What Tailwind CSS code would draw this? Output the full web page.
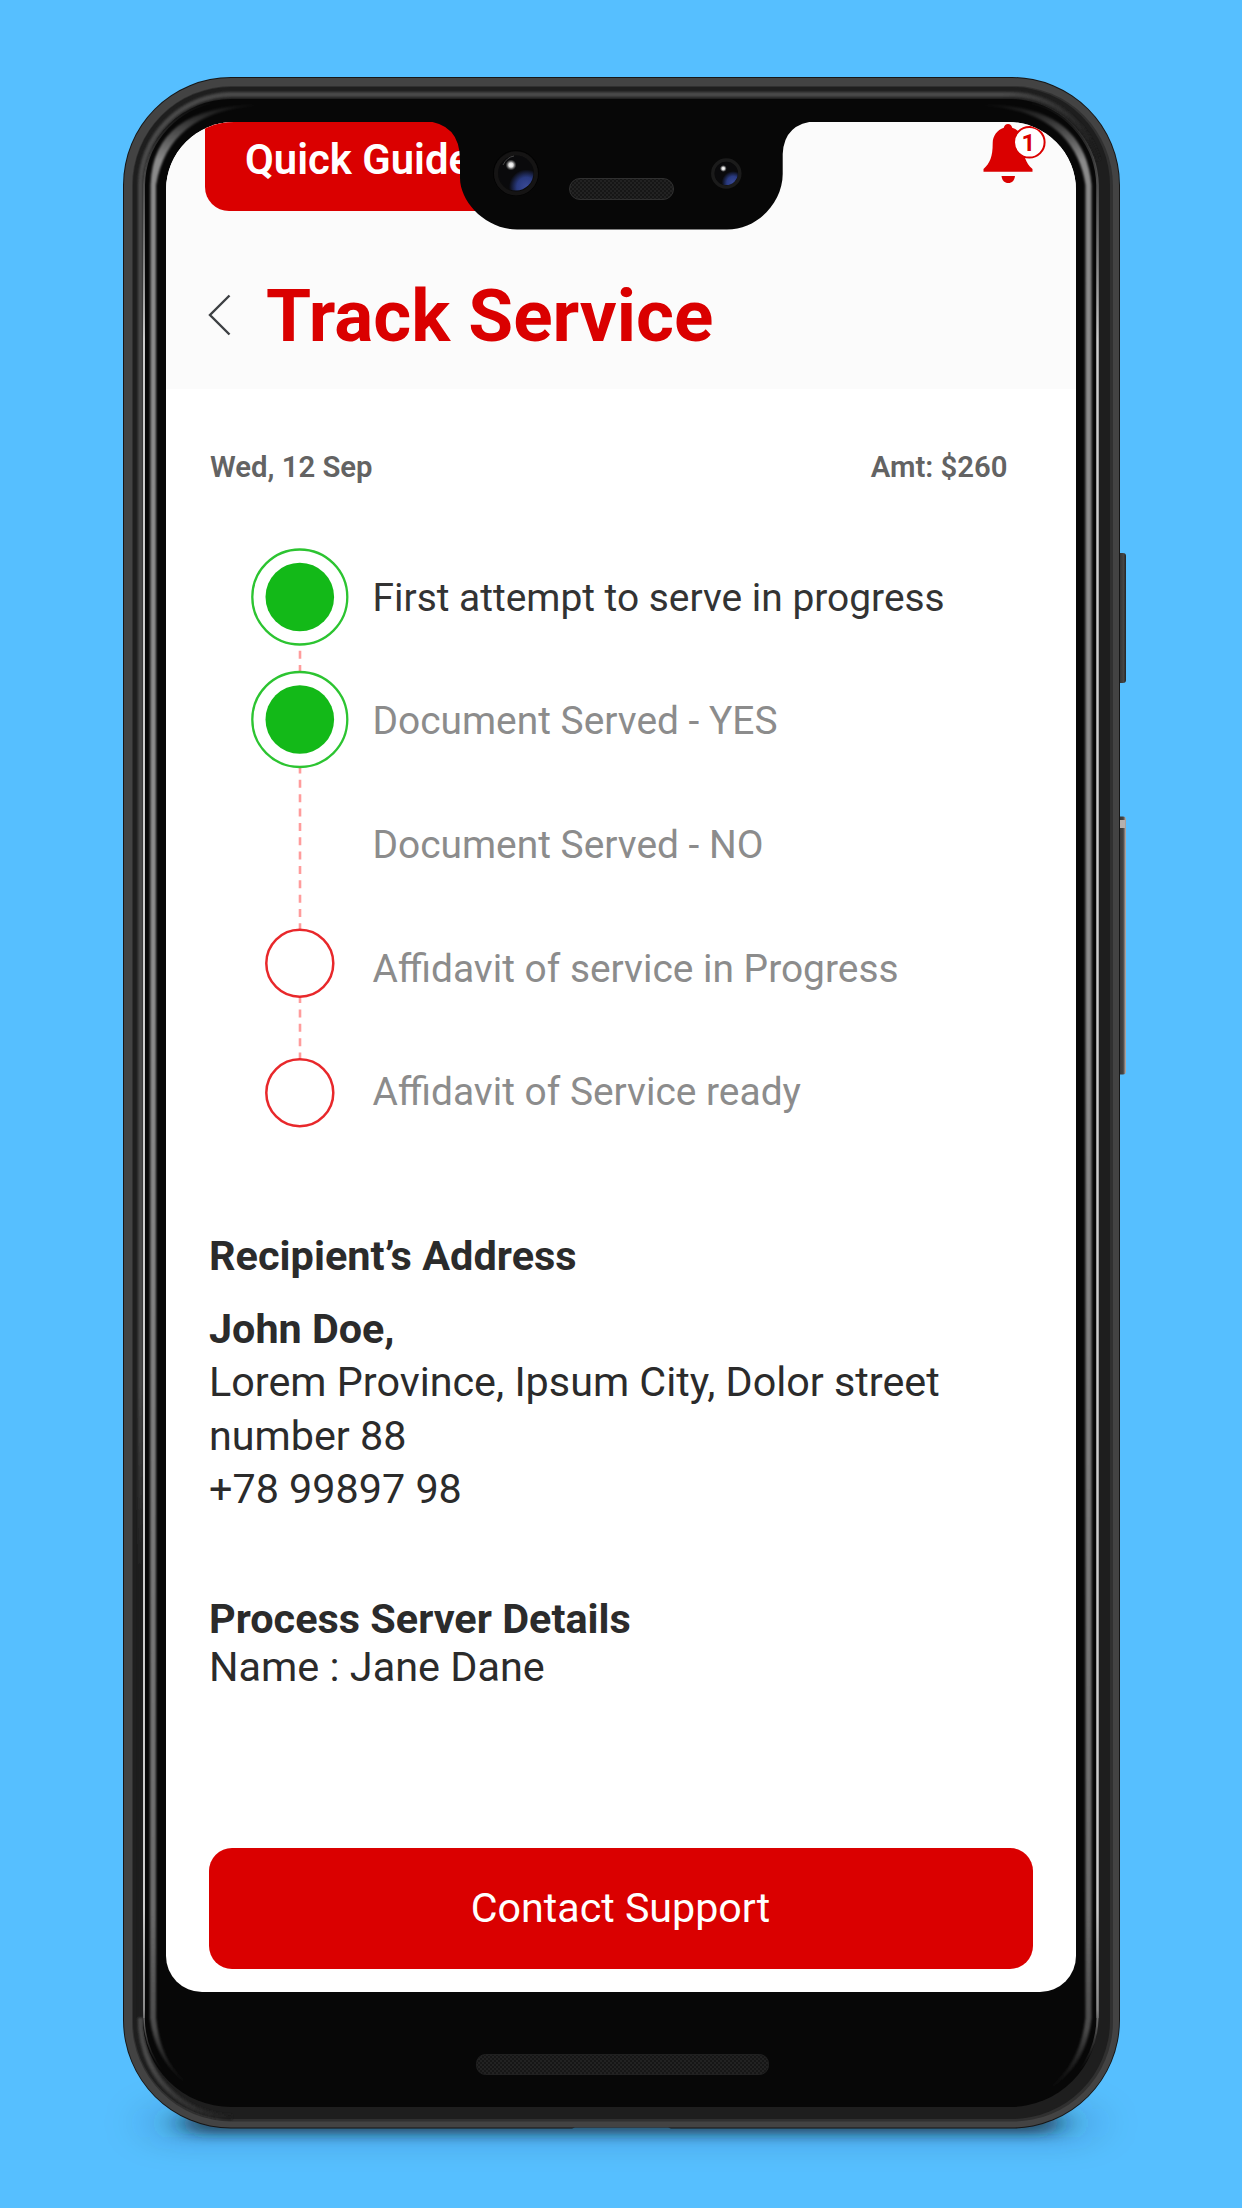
<!DOCTYPE html>
<html lang="en">
<head>
<meta charset="utf-8">
<title>Track Service</title>
<script src="https://cdn.jsdelivr.net/npm/@tailwindcss/browser@4"></script>
</head>
<body class="relative h-[2208px] w-[1242px] overflow-hidden bg-[#56bfff] font-['Roboto',sans-serif] text-[#2b2b2b]">

<!-- Phone body -->
<svg class="absolute inset-0" width="1242" height="2208" viewBox="0 0 1242 2208" fill="none">
  <defs>
    <filter id="soft" x="-10%" y="-200%" width="120%" height="500%"><feGaussianBlur stdDeviation="14 6"/></filter>
    <filter id="wide" x="-10%" y="-200%" width="120%" height="500%"><feGaussianBlur stdDeviation="24 16"/></filter>
    <filter id="edge" x="-5%" y="-5%" width="110%" height="110%"><feGaussianBlur stdDeviation="0.8"/></filter>
    <linearGradient id="fadeL" gradientUnits="userSpaceOnUse" x1="0" y1="100" x2="0" y2="2110">
      <stop offset="0" stop-color="#888" stop-opacity="0"/><stop offset=".03" stop-color="#8a8a8a"/><stop offset=".45" stop-color="#8c8c8c"/><stop offset=".9" stop-color="#6a6a6a"/><stop offset=".96" stop-color="#666" stop-opacity=".7"/><stop offset=".99" stop-color="#444" stop-opacity="0"/>
    </linearGradient>
    <linearGradient id="line" gradientUnits="userSpaceOnUse" x1="0" y1="100" x2="0" y2="2110">
      <stop offset="0" stop-color="#777" stop-opacity="0"/><stop offset=".04" stop-color="#777" stop-opacity=".6"/><stop offset=".12" stop-color="#ccc"/><stop offset=".9" stop-color="#ccc"/><stop offset=".95" stop-color="#aaa" stop-opacity=".8"/><stop offset=".98" stop-color="#444" stop-opacity="0"/>
    </linearGradient>
    <linearGradient id="ring" gradientUnits="userSpaceOnUse" x1="1000" y1="90" x2="1090" y2="150">
      <stop offset="0" stop-color="#4a4a4a"/><stop offset="1" stop-color="#1d1d1d"/>
    </linearGradient>
    <linearGradient id="ringL" gradientUnits="userSpaceOnUse" x1="150" y1="2060" x2="230" y2="2120">
      <stop offset="0" stop-color="#4a4a4a"/><stop offset="1" stop-color="#1d1d1d"/>
    </linearGradient>
    <linearGradient id="key" x1="0" y1="0" x2="1" y2="0"><stop offset="0" stop-color="#2c2c2c"/><stop offset=".7" stop-color="#454545"/><stop offset="1" stop-color="#222"/></linearGradient>
    <linearGradient id="power" x1="0" y1="0" x2="1" y2="0"><stop offset="0" stop-color="#333"/><stop offset=".65" stop-color="#444"/><stop offset="1" stop-color="#c0b2ac"/></linearGradient>
  </defs>
  <rect x="150" y="2108" width="942" height="30" rx="15" fill="#0b2a40" fill-opacity=".22" filter="url(#wide)"/>
  <rect x="184" y="2112" width="874" height="22" rx="11" fill="#0b1a28" fill-opacity=".65" filter="url(#soft)"/>
  <path d="M1118 553h5q3 0 3 3v124q0 3-3 3h-5z" fill="url(#key)"/>
  <path d="M1118 816.500h5q3 0 3 3v252q0 3-3 3h-5z" fill="url(#power)"/>
  <path d="M1120 820h5v8h-5z" fill="#b5b0ad"/>
  <path d="M231 77H1012A108 108 0 0 1 1120 185V2020A108 108.600 0 0 1 1012 2128.600H671l-3-1H575l-3 1H231A108 108.600 0 0 1 123 2020V185A108 108 0 0 1 231 77z" fill="#161616"/>
  <rect x="124" y="78" width="995" height="2049.500" rx="107" fill="#434343"/>
  <rect x="132" y="86" width="981" height="2035.500" rx="100" fill="#303030"/>
  <rect x="133" y="87" width="977" height="2032" rx="98" fill="#1e1e1e"/>
  <g filter="url(#edge)">
    <path d="M140.500 2020V185A92 91 0 0 1 231 94.500H1012A92 91 0 0 1 1098 160" stroke="url(#ring)" stroke-width="5"/>
    <path d="M140.500 2018A92 96 0 0 0 232 2117" stroke="url(#ringL)" stroke-width="5"/>
  </g>
  <rect x="143" y="99" width="955" height="2008" rx="88" fill="#070707"/>
  <path d="M144 2018V185A88 86 0 0 1 210 103" stroke="url(#line)" stroke-width="2"/>
  <path d="M144 2018A88 88 0 0 0 210 2102" stroke="url(#line)" stroke-width="1.500"/>
  <path d="M1097.500 2018V185A86 86 0 0 0 1032 103" stroke="url(#line)" stroke-width="2.500"/>
  <path d="M1097.500 2018A86 88 0 0 1 1032 2102" stroke="url(#line)" stroke-width="2"/>
  <g filter="url(#edge)">
    <path d="M150.500 185Q153 106 258 105Q168 112 156 185V2018Q162 2084 225 2104Q157 2080 150 2018z" fill="url(#fadeL)"/>
    <path d="M1091.500 185Q1084 104 983 105Q1074 112 1085.500 185V2018Q1078 2084 1017 2104Q1084 2084 1091.500 2018z" fill="url(#fadeL)"/>
  </g>
</svg>

<!-- Screen -->
<main class="absolute left-[166px] top-[122px] h-[1869.500px] w-[910px] overflow-hidden rounded-t-[68px] rounded-b-[36px] bg-white">
  <header class="h-[267px] bg-[#fbfbfb]">
    <div class="flex h-[89px] justify-between">
      <div class="ml-[39px] h-[88.500px] w-[320px] rounded-bl-[24px] bg-[#da0000] pl-[40px] text-[41.800px] leading-[75px] font-semibold whitespace-nowrap text-white">Quick Guide</div>
      <svg class="mr-[28px]" width="68" height="66" viewBox="980 122 68 66">
        <path d="M1008 124c2.200 0 3.800 1.400 4.200 3.800C1019 130 1023.500 136 1023.500 143c0 13 2 20 9 26v2.700H983.500V169c6.500-6 9.200-12 9.200-26 0-7 4.500-13 11.100-15.200C1004.200 125.400 1005.800 124 1008 124z" fill="#da0000"/>
        <path d="M1001.500 176h13.500c-.5 4.500-3 7-6.700 7s-6.300-2.500-6.800-7z" fill="#da0000"/>
        <circle cx="1029.300" cy="142.300" r="15.300" fill="#fff" stroke="#da0000" stroke-width="2"/>
        <text x="1028.500" y="151" text-anchor="middle" font-size="24" font-weight="700" fill="#da0000">1</text>
      </svg>
    </div>
    <div class="mt-[54px] flex h-[100px] items-center">
      <svg class="ml-[41px]" width="26" height="44" viewBox="0 0 26 44" fill="none" stroke="#3d4043" stroke-width="2.400"><path d="M22.500 2.500L3 22l19.500 19.500"/></svg>
      <h1 class="ml-[33px] pt-[2px] text-[72.900px] leading-[100px] font-bold text-[#da0000]">Track Service</h1>
    </div>
  </header>

  <div class="mt-[58px] flex h-[40px] justify-between pr-[68.500px] pl-[44px] text-[29.300px] leading-[40px] font-semibold text-[#636363]">
    <span>Wed, 12 Sep</span><span>Amt: $260</span>
  </div>

  <section class="mt-[47.500px] flex">
    <svg class="ml-[80px] shrink-0" width="110" height="618" viewBox="246 535 110 618" fill="none">
      <path d="M300 650.700V1060" stroke="#ff9c9c" stroke-width="2.600" stroke-dasharray="8 6.350"/>
      <g stroke="#2cc431" stroke-width="2.300" fill="#fff"><circle cx="299.800" cy="597" r="47.500"/><circle cx="299.800" cy="719.500" r="47.500"/></g>
      <g fill="#13b918"><circle cx="299.800" cy="597" r="34.300"/><circle cx="299.800" cy="719.500" r="34.300"/></g>
      <g stroke="#e8282b" stroke-width="2.500" fill="#fff"><circle cx="299.800" cy="963.300" r="33.500"/><circle cx="299.800" cy="1092.700" r="33.500"/></g>
    </svg>
    <ul class="-mb-[1px] ml-[16.500px] pt-[1px] text-[38.900px] leading-[123.700px] whitespace-nowrap text-[#8c8c8c]">
      <li class="text-[#333]">First attempt to serve in progress</li>
      <li>Document Served - YES</li>
      <li>Document Served - NO</li>
      <li>Affidavit of service in Progress</li>
      <li>Affidavit of Service ready</li>
    </ul>
  </section>

  <section class="mt-[77.500px] pl-[43px] text-[41.300px] leading-[53.300px]">
    <h2 class="text-[41.500px] leading-[50px] font-bold">Recipient’s Address</h2>
    <address class="mt-[22.500px] whitespace-nowrap not-italic">
      <strong class="block font-bold">John Doe,</strong>
      Lorem Province, Ipsum City, Dolor street<br>number 88<br>+78 99897 98
    </address>
  </section>

  <section class="mt-[80px] pl-[43px] text-[41.400px] leading-[47.300px]">
    <h2 class="font-bold">Process Server Details</h2>
    <p>Name : Jane Dane</p>
  </section>

  <button class="mt-[157px] ml-[42.500px] block h-[121px] w-[824px] rounded-[23px] bg-[#da0000] pt-[2px] text-[41.200px] text-white">Contact Support</button>
</main>

<!-- Notch, cameras and speakers -->
<svg class="absolute inset-0" width="1242" height="2208" viewBox="0 0 1242 2208" fill="none">
  <defs>
    <pattern id="mesh" width="4" height="4" patternUnits="userSpaceOnUse"><rect width="4" height="4" fill="#161616"/><path d="M0 0h2v2H0zM2 2h2v2H2z" fill="#222"/></pattern>
    <radialGradient id="lens" cx=".8" cy=".9" r=".5"><stop offset="0" stop-color="#3a4a96"/><stop offset=".55" stop-color="#293a80"/><stop offset="1" stop-color="#0a0a0c"/></radialGradient>
    <radialGradient id="glint"><stop offset="0" stop-color="#fff"/><stop offset=".4" stop-color="#ddd"/><stop offset="1" stop-color="#888" stop-opacity="0"/></radialGradient>
  </defs>
  <path d="M424 121Q460 123 460 160V178C460 202 486 229.500 517 229.500H727C758 229.500 782.700 202 782.700 174V154Q784 123 817 121z" fill="#070707"/>
  <circle cx="516" cy="173" r="22.500" fill="#0b0b0b" stroke="#020202"/>
  <circle cx="516" cy="173.500" r="20" stroke="#151414" stroke-width="4"/>
  <circle cx="516" cy="173" r="17.500" fill="url(#lens)"/>
  <path d="M503 165q4-8 11-9" stroke="#444" stroke-width="1"/>
  <circle cx="511" cy="165" r="5.500" fill="url(#glint)"/>
  <circle cx="726.300" cy="173.500" r="13.500" fill="#080808" stroke="#1b1b1b" stroke-width="3.500"/>
  <circle cx="726.300" cy="173.500" r="11.500" fill="url(#lens)"/>
  <circle cx="723.300" cy="168.500" r="3.500" fill="url(#glint)"/>
  <rect x="569.500" y="178.500" width="104" height="21" rx="10.500" fill="url(#mesh)" stroke="#303030"/>
  <rect x="476.500" y="2054.500" width="292" height="20" rx="9" fill="url(#mesh)" stroke="#202020"/>
</svg>
</body>
</html>
